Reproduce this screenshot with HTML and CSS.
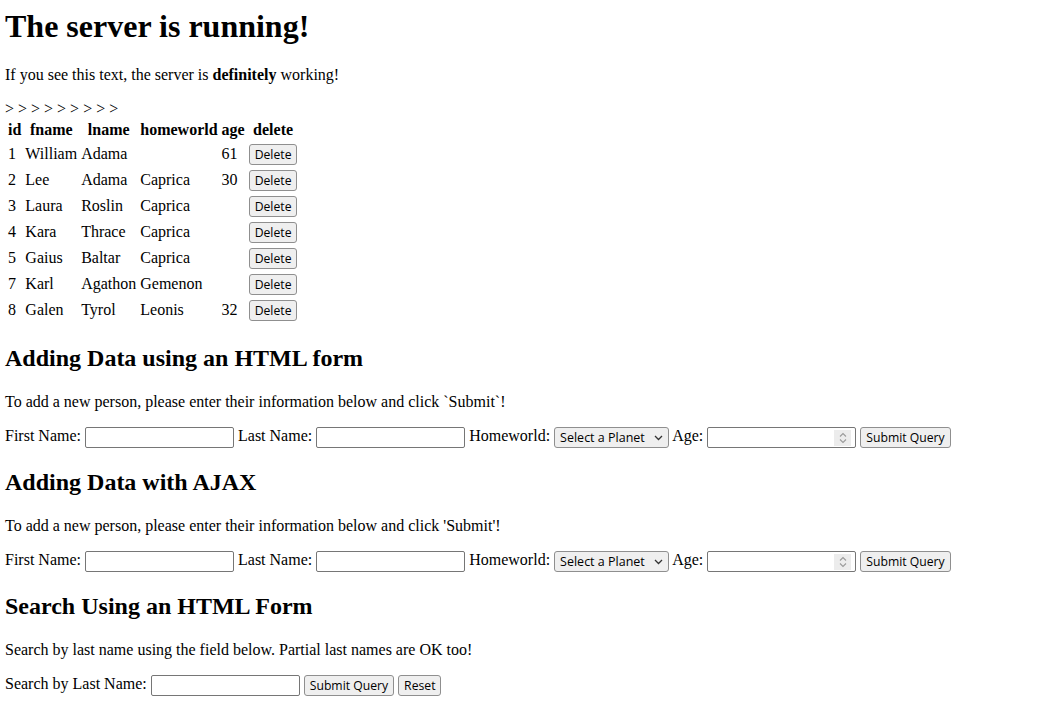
FILE: index.html
```html
<!DOCTYPE html>
<html>
<head>
<meta charset="utf-8">
<link rel="stylesheet" href="styles.css">
</head>
<body>
<h1>The server is running!</h1>
<p>If you see this text, the server is <b>definitely</b> working!</p>
<div>&gt; &gt; &gt; &gt; &gt; &gt; &gt; &gt; &gt;</div>
<table class="people">
<thead>
<tr><th>id</th><th>fname</th><th>lname</th><th>homeworld</th><th>age</th><th>delete</th></tr>
</thead>
<tbody>
<tr><td>1</td><td>William</td><td>Adama</td><td></td><td>61</td><td><button class="btn">Delete</button></td></tr>
<tr><td>2</td><td>Lee</td><td>Adama</td><td>Caprica</td><td>30</td><td><button class="btn">Delete</button></td></tr>
<tr><td>3</td><td>Laura</td><td>Roslin</td><td>Caprica</td><td></td><td><button class="btn">Delete</button></td></tr>
<tr><td>4</td><td>Kara</td><td>Thrace</td><td>Caprica</td><td></td><td><button class="btn">Delete</button></td></tr>
<tr><td>5</td><td>Gaius</td><td>Baltar</td><td>Caprica</td><td></td><td><button class="btn">Delete</button></td></tr>
<tr><td>7</td><td>Karl</td><td>Agathon</td><td>Gemenon</td><td></td><td><button class="btn">Delete</button></td></tr>
<tr><td>8</td><td>Galen</td><td>Tyrol</td><td>Leonis</td><td>32</td><td><button class="btn">Delete</button></td></tr>
</tbody>
</table>

<h2>Adding Data using an HTML form</h2>
<p>To add a new person, please enter their information below and click `Submit`!</p>
<form class="row">
First Name: <input type="text" class="txt">
Last Name: <input type="text" class="txt">
Homeworld: <span class="sel">Select a Planet<svg class="chev" width="9" height="6" viewBox="0 0 9 6"><path d="M1 1 L4.5 4.5 L8 1" fill="none" stroke="#333" stroke-width="1.3"/></svg></span>
Age: <span class="num"><input type="text" class="txt"><span class="spin"><svg width="10" height="14" viewBox="0 0 10 14"><path d="M2 5.5 L5 2.5 L8 5.5 M2 8.5 L5 11.5 L8 8.5" fill="none" stroke="#9a9a9a" stroke-width="1.1"/></svg></span></span>
<button type="button" class="btn">Submit Query</button>
</form>

<h2>Adding Data with AJAX</h2>
<p>To add a new person, please enter their information below and click 'Submit'!</p>
<form class="row">
First Name: <input type="text" class="txt">
Last Name: <input type="text" class="txt">
Homeworld: <span class="sel">Select a Planet<svg class="chev" width="9" height="6" viewBox="0 0 9 6"><path d="M1 1 L4.5 4.5 L8 1" fill="none" stroke="#333" stroke-width="1.3"/></svg></span>
Age: <span class="num"><input type="text" class="txt"><span class="spin"><svg width="10" height="14" viewBox="0 0 10 14"><path d="M2 5.5 L5 2.5 L8 5.5 M2 8.5 L5 11.5 L8 8.5" fill="none" stroke="#9a9a9a" stroke-width="1.1"/></svg></span></span>
<button type="button" class="btn">Submit Query</button>
</form>

<h2>Search Using an HTML Form</h2>
<p>Search by last name using the field below. Partial last names are OK too!</p>
<form class="row">
Search by Last Name: <input type="text" class="txt">
<button type="button" class="btn">Submit Query</button>
<button type="button" class="btn">Reset</button>
</form>
</body>
</html>
```
FILE: styles.css
```css
body {
  margin: 8px 5px;
  font-family: "Liberation Serif", "Times New Roman", serif;
  font-size: 16px;
  color: #000;
  background: #fff;
}
h1 { font-size: 32px; margin: 0 0 21px; }
h2 { font-size: 24px; line-height: 29px; margin: 20px 0; }
.people { margin-bottom: 1px; }
.people td { height: 22px; padding: 1px; }
.btn {
  font-family: "Open Sans", "Noto Sans", sans-serif;
  font-size: 12.2px;
  line-height: 17px;
  background: #efefef;
  border: 1px solid #8f8f8f;
  border-radius: 3px;
  padding: 0 5px;
  height: 21px;
  box-sizing: border-box;
  color: #000;
  vertical-align: middle;
}
.txt {
  font-family: "Open Sans", sans-serif;
  font-size: 12.2px;
  border: 1px solid #767676;
  border-radius: 2px;
  padding: 1px 2px;
  width: 149px;
  height: 21px;
  box-sizing: border-box;
  vertical-align: middle;
}
.sel {
  display: inline-flex;
  align-items: center;
  justify-content: space-between;
  font-family: "Open Sans", sans-serif;
  font-size: 12.5px;
  line-height: 17px;
  border: 1px solid #8f8f8f;
  border-radius: 3px;
  background: #efefef;
  color: #000;
  width: 115px;
  height: 21px;
  box-sizing: border-box;
  padding: 0 5px;
  vertical-align: middle;
}
.chev { margin-top: 1px; }
.num { position: relative; display: inline-block; vertical-align: middle; line-height: 0; }
.num .txt { vertical-align: top; }
.spin {
  position: absolute;
  right: 5px;
  top: 3px;
  width: 17px;
  height: 16px;
  background: #ececec;
  display: flex;
  align-items: center;
  justify-content: center;
}
```
